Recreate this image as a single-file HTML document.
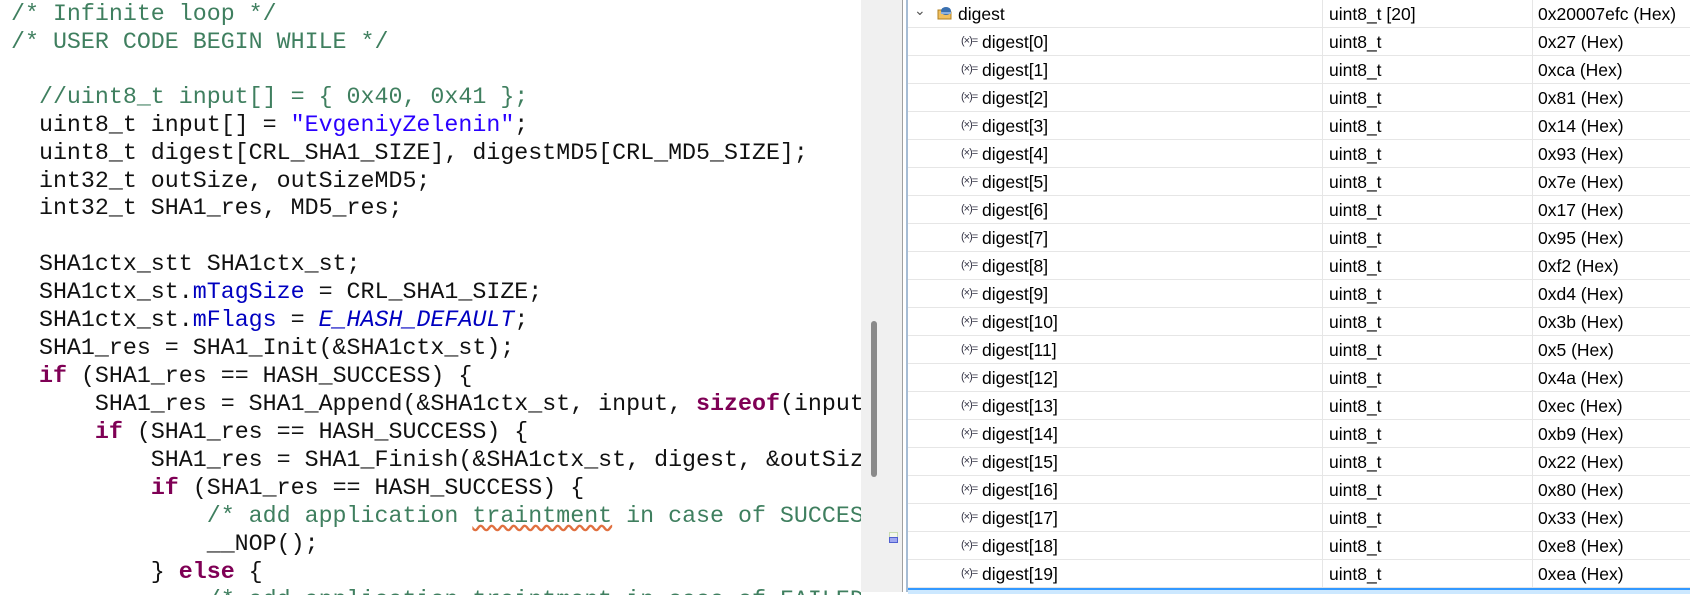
<!DOCTYPE html>
<html><head><meta charset="utf-8"><style>
body{margin:0;width:1690px;height:592px;overflow:hidden;background:#fff;position:relative}
#code{position:absolute;left:0;top:3px;width:861px;height:592px;overflow:hidden;font-family:"Liberation Mono",monospace;font-size:23.3px;color:#111}
.l{position:absolute;left:11px;white-space:pre;line-height:28px;height:28px}
.c{color:#3f7f5f}.k{color:#7f0055;font-weight:bold}.s{color:#2a00ff}.f{color:#0000c0}.e{color:#0000c0;font-style:italic}
#gut{position:absolute;left:861px;top:0;width:41px;height:592px;background:#f0f0f0}
#sb{position:absolute;left:871px;top:321px;width:6px;height:156px;background:#8a8a8a;border-radius:3px}
#l1{position:absolute;left:902px;top:0;width:1px;height:592px;background:#a0a0a0}
#l2{position:absolute;left:906px;top:0;width:2px;height:592px;background:#a6bcd4}
#tbl{position:absolute;left:908px;top:0;width:782px;height:592px;font-family:"Liberation Sans",sans-serif;font-size:17.5px;color:#000}
.r{position:absolute;left:0;width:782px;height:27px;border-bottom:1px solid #e6e6e6}
.r span{position:absolute;top:4px;white-space:nowrap}
.cs{position:absolute;top:0;width:1px;height:588px;background:#e6e6e6}
.r span.ic{top:7px;left:53px;font-size:11px;color:#334;letter-spacing:-1px}
</style></head><body>
<div id="code">
<div class="l c" style="top:-3px">/* Infinite loop */</div>
<div class="l c" style="top:25px">/* USER CODE BEGIN WHILE */</div>
<div class="l c" style="top:80px">  //uint8_t input[] = { 0x40, 0x41 };</div>
<div class="l" style="top:108px">  uint8_t input[] = <span class="s">"EvgeniyZelenin"</span>;</div>
<div class="l" style="top:136px">  uint8_t digest[CRL_SHA1_SIZE], digestMD5[CRL_MD5_SIZE];</div>
<div class="l" style="top:164px">  int32_t outSize, outSizeMD5;</div>
<div class="l" style="top:191px">  int32_t SHA1_res, MD5_res;</div>
<div class="l" style="top:247px">  SHA1ctx_stt SHA1ctx_st;</div>
<div class="l" style="top:275px">  SHA1ctx_st.<span class="f">mTagSize</span> = CRL_SHA1_SIZE;</div>
<div class="l" style="top:303px">  SHA1ctx_st.<span class="f">mFlags</span> = <span class="e">E_HASH_DEFAULT</span>;</div>
<div class="l" style="top:331px">  SHA1_res = SHA1_Init(&amp;SHA1ctx_st);</div>
<div class="l" style="top:359px">  <span class="k">if</span> (SHA1_res == HASH_SUCCESS) {</div>
<div class="l" style="top:387px">      SHA1_res = SHA1_Append(&amp;SHA1ctx_st, input, <span class="k">sizeof</span>(input));</div>
<div class="l" style="top:415px">      <span class="k">if</span> (SHA1_res == HASH_SUCCESS) {</div>
<div class="l" style="top:443px">          SHA1_res = SHA1_Finish(&amp;SHA1ctx_st, digest, &amp;outSize);</div>
<div class="l" style="top:471px">          <span class="k">if</span> (SHA1_res == HASH_SUCCESS) {</div>
<div class="l c" style="top:499px">              /* add application <span style="text-decoration:underline wavy #e07040">traintment</span> in case of SUCCESS */</div>
<div class="l" style="top:527px">              __NOP();</div>
<div class="l" style="top:555px">          } <span class="k">else</span> {</div>
<div class="l c" style="top:583px">              /* add application traintment in case of FAILED */</div>
</div>
<div id="gut"></div><div id="sb"></div>
<div style="position:absolute;left:889px;top:532px;width:7px;height:4px;border:1px solid #c8dcb0;background:#f4f8ec"></div>
<div style="position:absolute;left:889px;top:537px;width:7px;height:4px;border:1px solid #5060d0;background:#a0a8f0"></div>
<div id="l1"></div><div id="l2"></div>
<div id="tbl">
<div class="cs" style="left:414px"></div><div class="cs" style="left:624px"></div>
<div class="r" style="top:0"><span style="left:6px;top:2px;color:#555;font-size:14px">&#8964;</span>
<svg style="position:absolute;left:29px;top:6px" width="15" height="14"><path d="M1 4h5l1 2h7v7H1z" fill="#f0c060" stroke="#b08020"/><ellipse cx="9" cy="5" rx="5" ry="4" fill="#3a70b0"/><rect x="4" y="6" width="10" height="2" fill="#8ab0e0"/></svg>
<span style="left:50px">digest</span><span style="left:421px">uint8_t [20]</span><span style="left:630px">0x20007efc (Hex)</span></div>
<div id="rows"></div>
<div style="position:absolute;left:0;top:588px;width:782px;height:4px;background:#cce8ff;border-top:2px solid #3399ff"></div>
</div>
<script>
var v=["0x27","0xca","0x81","0x14","0x93","0x7e","0x17","0x95","0xf2","0xd4","0x3b","0x5","0x4a","0xec","0xb9","0x22","0x80","0x33","0xe8","0xea"],h="";
for(var i=0;i<20;i++){h+='<div class="r" style="top:'+(28*(i+1))+'px"><span class="ic">(×)=</span><span style="left:74px">digest['+i+']</span><span style="left:421px">uint8_t</span><span style="left:630px">'+v[i]+' (Hex)</span></div>';}
document.getElementById("rows").outerHTML=h;
</script>
</body></html>
